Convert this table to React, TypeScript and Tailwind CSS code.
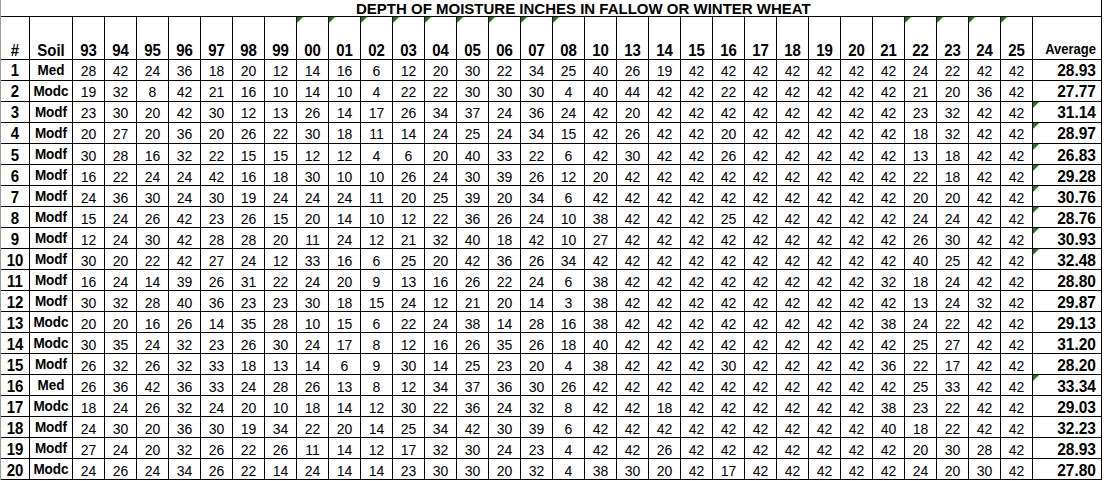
import React from 'react';

const years = [
  '93', '94', '95', '96', '97', '98', '99', '00', '01', '02', '03', '04', '05', '06', '07',
  '08', '10', '13', '14', '15', '16', '17', '18', '19', '20', '21', '22', '23', '24', '25',
];

const flaggedYears = new Set(['00', '01', '02', '03', '04', '05', '06', '07', '08', '22', '23', '24', '25']);
const flaggedRows = new Set([3, 4, 5, 6, 7, 8, 9, 10, 16]);

const rows: [string, string, string][] = [
  ['Med', '28 42 24 36 18 20 12 14 16 6 12 20 30 22 34 25 40 26 19 42 42 42 42 42 42 42 24 22 42 42', '28.93'],
  ['Modc', '19 32 8 42 21 16 10 14 10 4 22 22 30 30 30 4 40 44 42 42 22 42 42 42 42 42 21 20 36 42', '27.77'],
  ['Modf', '23 30 20 42 30 12 13 26 14 17 26 34 37 24 36 24 42 20 42 42 42 42 42 42 42 42 23 32 42 42', '31.14'],
  ['Modf', '20 27 20 36 20 26 22 30 18 11 14 24 25 24 34 15 42 26 42 42 20 42 42 42 42 42 18 32 42 42', '28.97'],
  ['Modf', '30 28 16 32 22 15 15 12 12 4 6 20 40 33 22 6 42 30 42 42 26 42 42 42 42 42 13 18 42 42', '26.83'],
  ['Modf', '16 22 24 24 42 16 18 30 10 10 26 24 30 39 26 12 20 42 42 42 42 42 42 42 42 42 22 18 42 42', '29.28'],
  ['Modf', '24 36 30 24 30 19 24 24 24 11 20 25 39 20 34 6 42 42 42 42 42 42 42 42 42 42 20 20 42 42', '30.76'],
  ['Modf', '15 24 26 42 23 26 15 20 14 10 12 22 36 26 24 10 38 42 42 42 25 42 42 42 42 42 24 24 42 42', '28.76'],
  ['Modf', '12 24 30 42 28 28 20 11 24 12 21 32 40 18 42 10 27 42 42 42 42 42 42 42 42 42 26 30 42 42', '30.93'],
  ['Modf', '30 20 22 42 27 24 12 33 16 6 25 20 42 36 26 34 42 42 42 42 42 42 42 42 42 42 40 25 42 42', '32.48'],
  ['Modf', '16 24 14 39 26 31 22 24 20 9 13 16 26 22 24 6 38 42 42 42 42 42 42 42 42 32 18 24 42 42', '28.80'],
  ['Modf', '30 32 28 40 36 23 23 30 18 15 24 12 21 20 14 3 38 42 42 42 42 42 42 42 42 42 13 24 32 42', '29.87'],
  ['Modc', '20 20 16 26 14 35 28 10 15 6 22 24 38 14 28 16 38 42 42 42 42 42 42 42 42 38 24 22 42 42', '29.13'],
  ['Modc', '30 35 24 32 23 26 30 24 17 8 12 16 26 35 26 18 40 42 42 42 42 42 42 42 42 42 25 27 42 42', '31.20'],
  ['Modf', '26 32 26 32 33 18 13 14 6 9 30 14 25 23 20 4 38 42 42 42 30 42 42 42 42 36 22 17 42 42', '28.20'],
  ['Med', '26 36 42 36 33 24 28 26 13 8 12 34 37 36 30 26 42 42 42 42 42 42 42 42 42 42 25 33 42 42', '33.34'],
  ['Modc', '18 24 26 32 24 20 10 18 14 12 30 22 36 24 32 8 42 42 18 42 42 42 42 42 42 38 23 22 42 42', '29.03'],
  ['Modf', '24 30 20 36 30 19 34 22 20 14 25 34 42 30 39 6 42 42 42 42 42 42 42 42 42 40 18 22 42 42', '32.23'],
  ['Modf', '27 24 20 32 26 22 26 11 14 12 17 32 30 24 23 4 42 42 26 42 42 42 42 42 42 42 20 30 28 42', '28.93'],
  ['Modc', '24 26 24 34 26 22 14 24 14 14 23 30 30 20 32 4 38 30 20 42 17 42 42 42 42 42 24 20 30 42', '27.80'],
];

// little green marker excel puts in the corner of a cell
const Flag = () => (
  <svg className="absolute left-0 top-0" width="6" height="6" viewBox="0 0 6 6">
    <polygon points="0,0 6,0 0,6" fill="#1f7a1f" />
  </svg>
);

const Txt = ({ children }: { children: React.ReactNode }) => (
  <span className="inline-block scale-y-110">{children}</span>
);

export default function App() {
  return (
    <div className="bg-white w-[1106px] h-[481px] overflow-hidden" style={{ fontFamily: '"Liberation Sans", Arial, sans-serif' }}>
      <div className="w-[1102px] border-l border-l-[#9c9c9c] grid grid-cols-[29px_43px_repeat(30,32px)_69px] text-black">
        <div className="col-span-full h-[17px] border-b border-r border-black pl-[355px] pt-px text-[15px] font-bold leading-[15px] whitespace-nowrap">
          DEPTH OF MOISTURE INCHES IN FALLOW OR WINTER WHEAT
        </div>

        <div className="h-[43px] border-b border-r border-black flex items-end justify-center pb-[2px] text-[15px] font-bold leading-[15px]">
          <Txt>#</Txt>
        </div>
        <div className="border-b border-r border-black flex items-end justify-center pb-[2px] text-[15px] font-bold leading-[15px]">
          <Txt>Soil</Txt>
        </div>
        {years.map((y) => (
          <div key={y} className="relative border-b border-r border-black flex items-end justify-center pb-[2px] text-[15px] font-bold leading-[15px]">
            {flaggedYears.has(y) && <Flag />}
            <Txt>{y}</Txt>
          </div>
        ))}
        <div className="border-b border-r border-black flex items-end justify-end pr-[5px] pb-[2px] text-[13px] font-bold leading-[15px]">
          <Txt>Average</Txt>
        </div>

        {rows.map(([soil, vals, avg], i) => (
          <React.Fragment key={i}>
            <div className="h-[21px] border-b border-r border-black flex items-center justify-center pt-px text-[15px] font-bold leading-[18px]">
              <Txt>{i + 1}</Txt>
            </div>
            <div className="border-b border-r border-black flex items-center justify-center pt-px text-[13.5px] font-bold leading-[18px]">
              <Txt>{soil}</Txt>
            </div>
            {vals.split(' ').map((v, j) => (
              <div key={j} className="border-b border-r border-black flex items-center justify-center pt-px text-[14px] leading-[18px]">
                <Txt>{v}</Txt>
              </div>
            ))}
            <div className="relative border-b border-r border-black flex items-center justify-end pr-[5px] pt-px text-[15.5px] font-bold leading-[18px]">
              {flaggedRows.has(i + 1) && <Flag />}
              <Txt>{avg}</Txt>
            </div>
          </React.Fragment>
        ))}
      </div>
    </div>
  );
}
